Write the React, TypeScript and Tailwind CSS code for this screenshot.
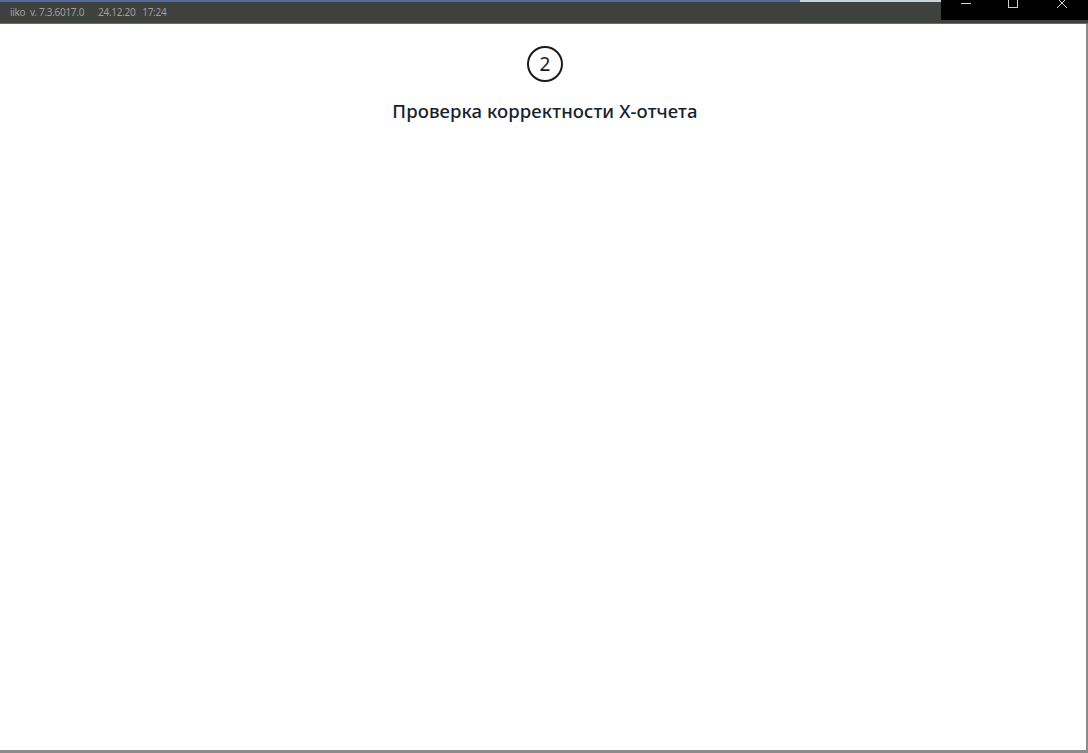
import React from "react";

export default function App() {
  return (
    <div className="w-[1088px] h-[753px] bg-white flex flex-col overflow-hidden" style={{ fontFamily: '"Noto Sans", "Open Sans", sans-serif' }}>
      <div className="flex h-[24px] shrink-0">
        <div className="flex-1 flex flex-col">
          <div className="h-[2px] flex">
            <div className="w-[800px] bg-[#4f6c9c]" />
            <div className="flex-1 bg-[#c9d1de]" />
          </div>
          <div className="flex-1 bg-[#3f413e] flex items-center pl-[10px] text-[10px] text-[#9c9e9a] tracking-[-0.3px] gap-[14px]">
            <span>iiko&nbsp; v. 7.3.6017.0</span>
            <span>24.12.20&nbsp;&nbsp; 17:24</span>
          </div>
          <div className="h-[1px] bg-[#6a6b68]" />
        </div>
        <div className="w-[147px] flex flex-col">
          <div className="h-[20px] bg-black flex items-start">
            <div className="w-[46px] h-[20px] flex items-start justify-center">
              <div className="w-[10px] h-[1px] bg-[#cfcfcf] mt-[3px] ml-[3px]" />
            </div>
            <div className="w-[46px] h-[20px] flex items-start justify-center">
              <div className="w-[10px] h-[8px] border border-[#cfcfcf] border-t-0 mt-0 ml-[6px]" />
            </div>
            <div className="w-[55px] h-[20px] flex items-start justify-center">
              <svg width="12" height="8" viewBox="0 0 12 8" className="ml-[3px]">
                <path d="M1 -2 L11 8 M11 -2 L1 8" stroke="#d4d4d4" strokeWidth="1" />
              </svg>
            </div>
          </div>
          <div className="flex-1 bg-[#3f413e]" />
          <div className="h-[1px] bg-[#6a6b68]" />
        </div>
      </div>
      <div className="flex-1 flex">
        <div className="flex-1 flex flex-col items-center pl-[4px]">
          <div className="mt-[22px] w-[36px] h-[36px] rounded-full border-2 border-[#1b1b1b] flex items-center justify-center text-[19px] text-[#1b1b1b] leading-none">
            2
          </div>
          <div className="mt-[15px] text-[18.5px] font-medium text-[#16222b] tracking-[0.1px]">
            Проверка корректности X-отчета
          </div>
        </div>
        <div className="w-[2px] bg-[#8a8a8a]" />
      </div>
      <div className="h-[3px] bg-[#8a8a8a] shrink-0" />
    </div>
  );
}
